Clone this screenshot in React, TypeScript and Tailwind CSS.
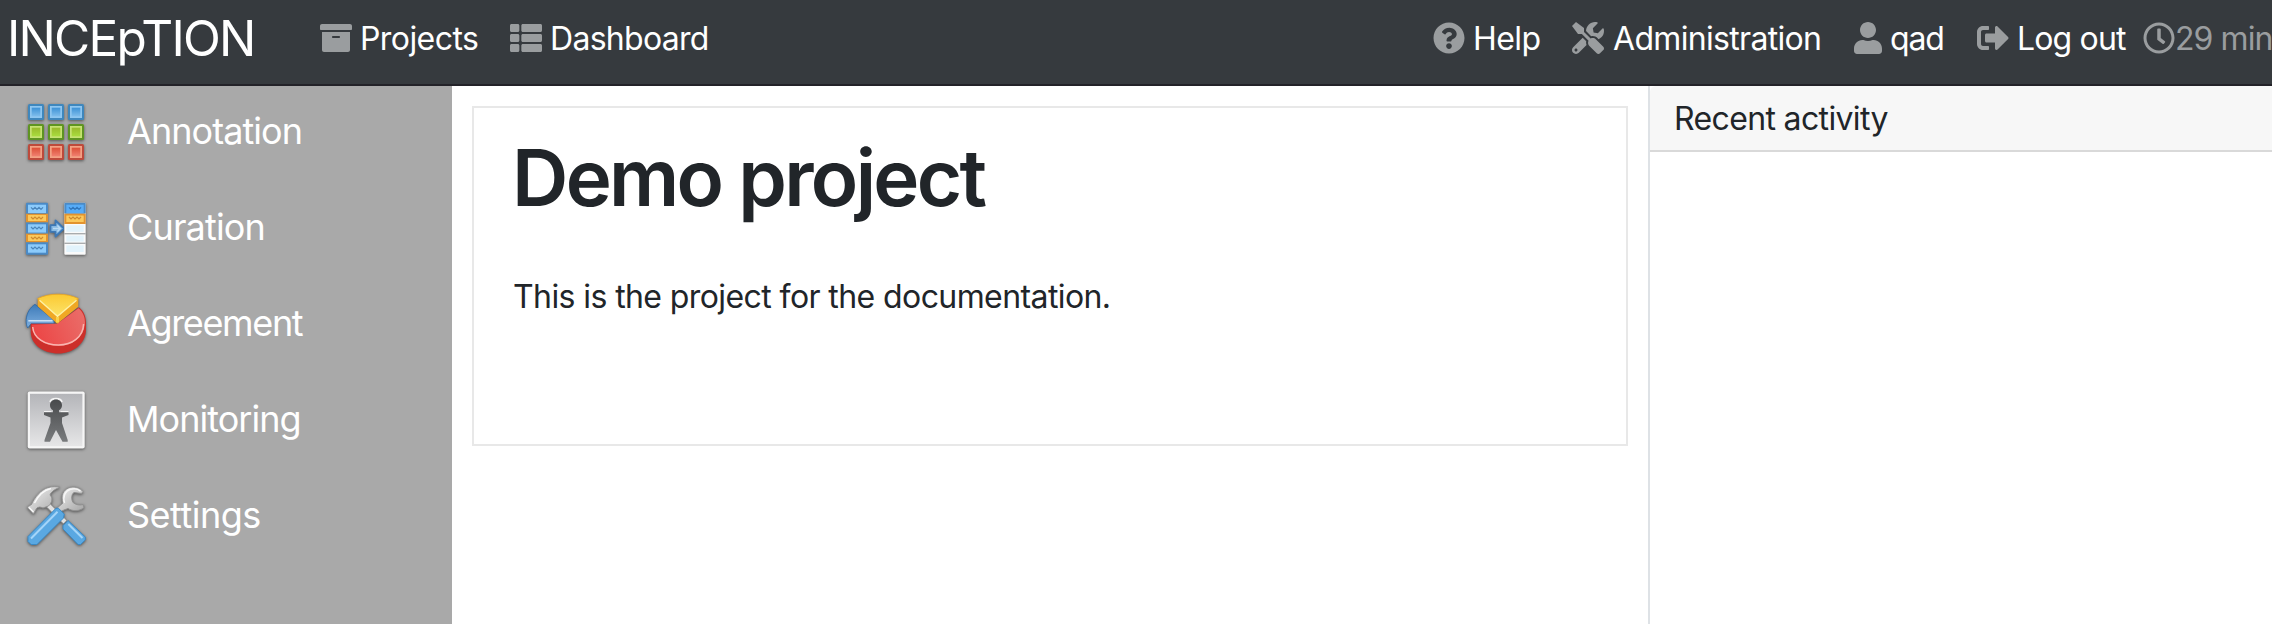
import type { ReactNode } from 'react'
import {
  FaArchive,
  FaQuestionCircle,
  FaRegClock,
  FaSignOutAlt,
  FaThList,
  FaTools,
  FaUser,
} from 'react-icons/fa'

const shadow = 'overflow-visible [filter:drop-shadow(0_1px_1.5px_rgba(0,0,0,0.5))]'

function AnnotationIcon() {
  const rows = [
    { y: 2, edge: '#3f87bd', rim: '#8ec6f0', fill: 'url(#sq-blue)' },
    { y: 22, edge: '#5f9422', rim: '#c6e272', fill: 'url(#sq-green)' },
    { y: 42, edge: '#bd4a3c', rim: '#f3a184', fill: 'url(#sq-red)' },
  ]
  return (
    <svg width="60" height="60" viewBox="0 0 60 60" className={shadow}>
      <defs>
        <linearGradient id="sq-blue" x2="0" y2="1">
          <stop stopColor="#3d92d6" />
          <stop offset="1" stopColor="#7fbdec" />
        </linearGradient>
        <linearGradient id="sq-green" x2="0" y2="1">
          <stop stopColor="#9aba2c" />
          <stop offset="1" stopColor="#a9dc3e" />
        </linearGradient>
        <linearGradient id="sq-red" x2="0" y2="1">
          <stop stopColor="#dc4f38" />
          <stop offset="1" stopColor="#f08070" />
        </linearGradient>
      </defs>
      {rows.map((r) =>
        [2, 22, 42].map((x) => (
          <g key={`${x}-${r.y}`}>
            <rect x={x} y={r.y} width="16" height="16" rx="1.5" fill={r.edge} />
            <rect x={x + 2} y={r.y + 2} width="12" height="12" fill={r.rim} />
            <rect x={x + 3.7} y={r.y + 3.7} width="8.6" height="8.6" fill={r.fill} />
          </g>
        )),
      )}
    </svg>
  )
}

function Squiggle({ x, y, color }: { x: number; y: number; color: string }) {
  return (
    <path
      d={`M${x} ${y - 1}l2 2 2-2 2 2 2-2 2 2 2-2`}
      fill="none"
      stroke={color}
      strokeWidth="1.2"
    />
  )
}

function CurationIcon() {
  return (
    <svg width="60" height="60" viewBox="0 0 60 60" className={shadow}>
      <rect x="0" y="4.7" width="22" height="52" rx="1" fill="#4a8ac6" />
      <rect x="2" y="6.7" width="18" height="8.3" fill="#8ccbfb" />
      <rect x="0" y="15.7" width="22" height="8.6" fill="#e2932f" />
      <rect x="2" y="17" width="18" height="6" fill="#fbc95c" />
      <rect x="2" y="26.3" width="18" height="8.3" fill="#8ccbfb" />
      <rect x="0" y="35.6" width="22" height="8.6" fill="#e2932f" />
      <rect x="2" y="37" width="18" height="6" fill="#fbc95c" />
      <rect x="2" y="46.3" width="18" height="8.4" fill="#8ccbfb" />
      <Squiggle x={5} y={10.3} color="#4a86bd" />
      <Squiggle x={5} y={20} color="#cf8a30" />
      <Squiggle x={5} y={30} color="#4a86bd" />
      <Squiggle x={5} y={40} color="#cf8a30" />
      <Squiggle x={5} y={50} color="#4a86bd" />
      <path
        d="M24.5 27.2H29.5V22.5L38 30.5L29.5 38.5V33.8H24.5Z"
        fill="#86b8e2"
        stroke="#3d78b5"
        strokeWidth="1.8"
        strokeLinejoin="round"
      />
      <path d="M27 30.5h7m-2.6-3 3 3-3 3" fill="none" stroke="#b9daf4" strokeWidth="1.3" />
      <rect x="38.3" y="4.7" width="21.4" height="52" rx="1" fill="#fafafa" />
      <rect x="38.3" y="4.7" width="21.4" height="11" rx="1" fill="#4a8ac6" />
      <rect x="40.3" y="6.7" width="17.4" height="8.3" fill="#57acf8" />
      <rect x="38.3" y="15.7" width="21.4" height="10.3" fill="#e2932f" />
      <rect x="40.3" y="17.5" width="17.4" height="6.5" fill="#fbc95c" />
      <rect x="40.3" y="27.3" width="17.4" height="6.5" fill="#e2f3fc" />
      <rect x="38.3" y="35" width="21.4" height="1.4" fill="#a9acae" />
      <rect x="40.3" y="37.6" width="17.4" height="6" fill="#e2f3fc" />
      <rect x="38.3" y="44.6" width="21.4" height="1.4" fill="#a9acae" />
      <rect x="40.3" y="47.4" width="17.4" height="6.6" fill="#e2f3fc" />
      <Squiggle x={43} y={10.3} color="#2f76bd" />
      <Squiggle x={43} y={20} color="#cf8a30" />
    </svg>
  )
}

function AgreementIcon() {
  return (
    <svg width="60" height="60" viewBox="0 0 60 60" className={shadow}>
      <defs>
        <linearGradient id="pie-red" x1="0" y1="0.6" x2="1" y2="0.3">
          <stop stopColor="#ec4545" />
          <stop offset="1" stopColor="#ea6c68" />
        </linearGradient>
        <linearGradient id="pie-blue" x2="0" y2="1">
          <stop stopColor="#3d7ab8" />
          <stop offset="1" stopColor="#7fb0e0" />
        </linearGradient>
        <linearGradient id="pie-yellow" x2="0" y2="1">
          <stop stopColor="#fbc932" />
          <stop offset="1" stopColor="#fce46a" />
        </linearGradient>
      </defs>
      <path d="M9 10.3L28 26.5V29.8H5L1.7 34C0.6 31.5 0 29 .2 25.5C.8 19 4 13.5 9 10.3Z" fill="url(#pie-blue)" stroke="#2f68a4" strokeWidth="0.8" />
      <path d="M2.3 26.8H26.5" stroke="#d8e9f8" strokeWidth="1.4" />
      <path d="M31.3 29.7L53 13.2C57.5 17 60 22 60 29V37C59 50 47 59.5 32.5 59.5C17 59.5 5 50.5 4.7 38V29.7Z" fill="#cc2f2a" />
      <path d="M31.3 29.7L52.5 14.2C57 18 59 22.5 59 29C58 43 46 52 32.5 52C18 52 6.5 43.5 5.7 30.7Z" fill="url(#pie-red)" />
      <path d="M6.7 33C7.5 44 18.5 51 32.5 51C46 51 57.3 43 57.6 30" fill="none" stroke="#f9b5b0" strokeWidth="1.5" />
      <path d="M11.7 4.3V12.3L31.3 29.7L52.3 12.7V4.3L31.5 22.5Z" fill="#f0a824" />
      <path d="M11.7 4.6C23 -1.3 41 -1.3 52.3 4.6L31.5 22.5Z" fill="url(#pie-yellow)" stroke="#eba824" strokeWidth="0.9" />
      <path d="M13.5 6.2L31.5 22.3L50.5 6.2" fill="none" stroke="#fff3a6" strokeWidth="1.4" />
      <path d="M31.5 23V28.5" stroke="#fbd24a" strokeWidth="3" />
    </svg>
  )
}

function MonitoringIcon() {
  return (
    <svg width="60" height="60" viewBox="0 0 60 60" className={shadow}>
      <defs>
        <linearGradient id="mon-bg" x2="0" y2="1">
          <stop stopColor="#b4b5b9" />
          <stop offset="1" stopColor="#e6e6e7" />
        </linearGradient>
        <linearGradient id="mon-man" x2="0" y2="1">
          <stop stopColor="#484a4c" />
          <stop offset="1" stopColor="#797b7d" />
        </linearGradient>
      </defs>
      <rect x="1.7" y="1.5" width="57" height="57" rx="2" fill="#f6f6f6" />
      <rect x="4" y="3.8" width="52.4" height="52.4" fill="url(#mon-bg)" />
      <path d="M24 12C25 7.5 35 7.5 36 12M18 21.7H25.5M34.5 21.7H42.5" fill="none" stroke="#f4f4f4" strokeWidth="1.6" />
      <path
        d="M30 9.5C33.5 9.5 36 12 36 15.2C36 17.5 34.8 19.3 33 20.3V22.3H42.5V25L36 27.5V33L41.7 50V51.8H36.5L30 40L24 51.8H18.5V50L24.5 33V27.5L18 25V22.3H27V20.3C25.2 19.3 24 17.5 24 15.2C24 12 26.5 9.5 30 9.5Z"
        fill="url(#mon-man)"
      />
    </svg>
  )
}

function SettingsIcon() {
  return (
    <svg width="60" height="60" viewBox="0 0 60 60" className={shadow}>
      <defs>
        <linearGradient id="steel" x2="1" y2="1">
          <stop stopColor="#f2f2f2" />
          <stop offset="1" stopColor="#a4a4a4" />
        </linearGradient>
      </defs>
      <path d="M22 19L39 36" stroke="#8a8a8a" strokeWidth="6" />
      <path d="M22 19L39 36" stroke="#e0e0e0" strokeWidth="4" />
      <path
        d="M1 21L5.5 18.5C8 12 15 3.5 22 1.5C27 .2 31 .5 34 1.3C29 3 25 6 24 9C27 12 26.5 16 22.5 20L17 22C14 20.5 12 21 10.5 22.5L7.5 28Z"
        fill="url(#steel)"
        stroke="#909090"
        strokeWidth="1"
        strokeLinejoin="round"
      />
      <path d="M3 21.5L7.5 26M8.5 17C12 10 18 4 25 2.5" fill="none" stroke="#fafafa" strokeWidth="1.5" />
      <path
        d="M34 26L30.5 22.5L37 17C34.5 10 37 4 43 1.7C48 0 54 1.5 57 5.5L55.5 7.5L48 6.5C45.5 8 45 13 47 16.5C50 19 54 19.5 57 18.5L58 21.5C54 25.5 46.5 25.5 42 22.5L38 24Z"
        fill="url(#steel)"
        stroke="#909090"
        strokeWidth="1"
        strokeLinejoin="round"
      />
      <path d="M38.5 17C36.5 10.5 39 5 44.5 3.3C48.5 2.2 52.5 3.3 54.5 5.3" fill="none" stroke="#f6f6f6" strokeWidth="1.5" />
      <path d="M32.3 22.2L38.3 28L37.5 32L11 58.5H5L2 55.5V50.5L30 22.3Z" fill="#5aa8e2" stroke="#3a88c4" strokeWidth="1" strokeLinejoin="round" />
      <path d="M5 52.5L31.5 25.8" stroke="#a5d5f8" strokeWidth="2" />
      <path d="M42 34.5L59.3 51V54L54.5 58.5H52L37 43V39.5Z" fill="#5aa8e2" stroke="#3a88c4" strokeWidth="1" strokeLinejoin="round" />
      <path d="M42.3 38L56.5 52" stroke="#a5d5f8" strokeWidth="2" />
    </svg>
  )
}

type NavItemProps = {
  icon: ReactNode
  width: string
  gap: string
  label: string
  tracking: string
  muted?: boolean
}

function NavItem({ icon, width, gap, label, tracking, muted }: NavItemProps) {
  return (
    <a className={`flex shrink-0 items-center text-[32px] leading-[40px] whitespace-nowrap ${width} ${gap}`}>
      <span className="shrink-0 text-[#9a9d9f]">{icon}</span>
      <span className={`pt-[2px] ${tracking} ${muted ? 'text-[#9a9d9f]' : 'text-white'}`}>{label}</span>
    </a>
  )
}

const menu = [
  { label: 'Annotation', tracking: 'tracking-[-0.94px] -ml-px', icon: <AnnotationIcon /> },
  { label: 'Curation', tracking: 'tracking-[-0.85px] -ml-px', icon: <CurationIcon /> },
  { label: 'Agreement', tracking: 'tracking-[-1.35px] -ml-px', icon: <AgreementIcon /> },
  { label: 'Monitoring', tracking: 'tracking-[-0.96px] -ml-px', icon: <MonitoringIcon /> },
  { label: 'Settings', tracking: 'tracking-[-0.5px] -ml-px', icon: <SettingsIcon /> },
]

export default function App() {
  return (
    <div className="flex h-[624px] w-[2272px] flex-col overflow-hidden bg-white font-['Inter',sans-serif] font-[440] text-[#212529]">
      <header className="flex h-[86px] shrink-0 items-center border-b-2 border-[#232228] bg-[#363a3e] pb-2 pl-[7px]">
        <span className="w-[313px] shrink-0 text-[49.5px] leading-[60px] tracking-[-1.75px] text-white">INCEpTION</span>
        <NavItem icon={<FaArchive size={32} />} width="w-[190px]" gap="gap-[8px]" label="Projects" tracking="tracking-[-0.57px]" />
        <NavItem icon={<FaThList size={32} />} width="w-[200px]" gap="gap-[8px]" label="Dashboard" tracking="tracking-[-0.7px]" />
        <div className="ml-auto flex w-[839px] shrink-0">
          <NavItem icon={<FaQuestionCircle size={32} />} width="w-[139px]" gap="gap-[8px]" label="Help" tracking="tracking-[-0.57px]" />
          <NavItem icon={<FaTools size={32} />} width="w-[280px]" gap="gap-[9px]" label="Administration" tracking="tracking-[-0.68px]" />
          <NavItem icon={<FaUser size={32} />} width="w-[125px]" gap="gap-[6px]" label="qad" tracking="tracking-[-1.2px]" />
          <NavItem icon={<FaSignOutAlt size={32} />} width="w-[166px]" gap="gap-[8px]" label="Log out" tracking="tracking-[-0.83px]" />
          <NavItem icon={<FaRegClock size={32} />} width="w-[129px]" gap="gap-0" label="29 min" tracking="tracking-[-0.92px]" muted />
        </div>
      </header>
      <div className="flex min-h-0 flex-1">
        <nav className="flex w-[452px] shrink-0 flex-col gap-9 bg-[#a9a9a9] pt-4 pl-[26px]">
          {menu.map((m) => (
            <a key={m.label} className="flex h-[60px] items-center gap-[42px] text-[36px] leading-[44px] text-white">
              {m.icon}
              <span className={`pb-[3px] ${m.tracking}`}>{m.label}</span>
            </a>
          ))}
        </nav>
        <main className="min-w-0 flex-1 p-5">
          <section className="h-[340px] w-[1156px] border-2 border-[#e8e8e8] pt-[22px] pl-10">
            <h1 className="-ml-[2px] text-[78px] leading-[96px] font-[570] tracking-[-2.7px]">Demo project</h1>
            <p className="mt-[51px] -ml-px text-[32px] leading-[40px] tracking-[-0.59px]">This is the project for the documentation.</p>
          </section>
        </main>
        <aside className="w-[624px] shrink-0 border-l-2 border-[#dee2e6]">
          <h2 className="h-[66px] rounded-tl-[6px] border-b-2 border-[#d9d9d9] bg-[#f7f7f7] pt-[13px] pl-6 text-[32px] leading-[40px] tracking-[-0.64px]">
            Recent activity
          </h2>
        </aside>
      </div>
    </div>
  )
}
